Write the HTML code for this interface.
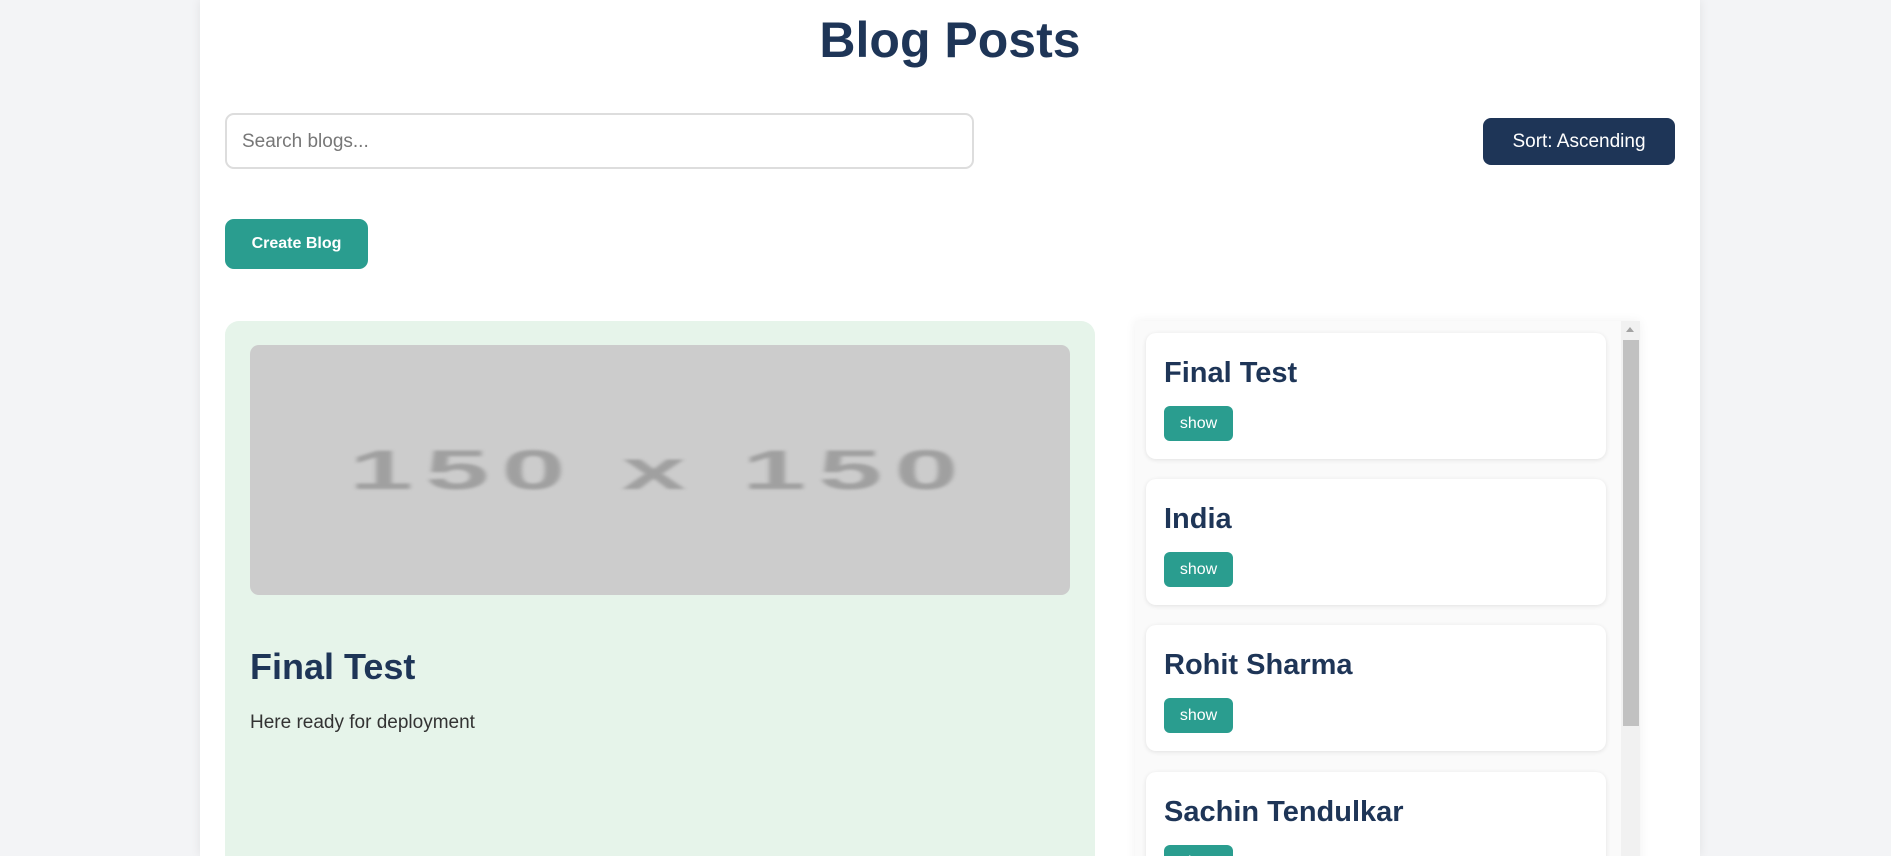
<!DOCTYPE html>
<html style="overflow:hidden;height:856px"><head><style>
*{box-sizing:border-box;margin:0;padding:0}
html,body{overflow:hidden}
body{width:1891px;height:856px;background:#f3f4f6;font-family:"Liberation Sans",Arial,sans-serif;position:relative}
.wrap{position:absolute;left:200px;top:0;width:1500px;height:856px;background:#fff;box-shadow:0 0 10px rgba(0,0,0,.08);overflow:hidden}
h1{position:absolute;left:0;width:1500px;top:11px;text-align:center;font-size:50px;color:#1e3557;font-weight:bold}
.search{position:absolute;left:25px;top:113px;width:749px;height:56px;border:2px solid #ddd;border-radius:9px;font-size:19px;color:#777;padding:16px 15px}
.sort{position:absolute;left:1283px;top:118px;width:192px;height:47px;background:#1e3557;color:#fff;border-radius:8px;font-size:19px;text-align:center;line-height:47px}
.create{position:absolute;left:25px;top:219px;width:143px;height:50px;background:#2a9d8f;color:#fff;border-radius:9px;font-size:16px;font-weight:bold;text-align:center;line-height:50px}
.main{position:absolute;left:25px;top:321px;width:870px;height:560px;background:#e6f4ea;border-radius:14px}
.img{position:absolute;left:25px;top:24px;width:820px;height:250px;background:#cccccc;border-radius:9px;overflow:hidden}
.img span{position:absolute;left:0;width:820px;top:0;line-height:250px;text-align:center;font-size:56px;font-weight:bold;color:#a0a0a0;letter-spacing:6px;transform:scaleX(2.05);filter:blur(1.2px)}
.main h2{position:absolute;left:25px;top:325px;font-size:36px;color:#1e3557}
.main p{position:absolute;left:25px;top:391px;font-size:19px;color:#333}
.list{position:absolute;left:935px;top:321px;width:505px;height:560px;background:#fafafa;box-shadow:0 0 10px rgba(0,0,0,.06)}
.sb{position:absolute;left:486px;top:0;width:19px;height:560px;background:#f1f1f1}
.sb .th{position:absolute;left:2px;top:19px;width:16px;height:386px;background:#c1c1c1}
.sb .ar{position:absolute;left:5px;top:6px;width:0;height:0;border-left:4px solid transparent;border-right:4px solid transparent;border-bottom:5px solid #a3a3a3}
.card{position:absolute;left:11px;width:460px;height:126px;background:#fff;border-radius:10px;box-shadow:0 1px 5px rgba(0,0,0,.1)}
.card h3{position:absolute;left:18px;top:24px;font-size:29px;color:#1e3557}
.card .b{position:absolute;left:18px;top:73px;width:69px;height:35px;background:#2a9d8f;color:#fff;border-radius:6px;font-size:16px;text-align:center;line-height:35px}
</style></head><body>
<div class="wrap">
<h1>Blog Posts</h1>
<div class="search">Search blogs...</div>
<div class="sort">Sort: Ascending</div>
<div class="create">Create Blog</div>
<div class="main">
<div class="img"><span>150 x 150</span></div>
<h2>Final Test</h2>
<p>Here ready for deployment</p>
</div>
<div class="list">
<div class="card" style="top:12px"><h3>Final Test</h3><div class="b">show</div></div>
<div class="card" style="top:158px"><h3>India</h3><div class="b">show</div></div>
<div class="card" style="top:304px"><h3>Rohit Sharma</h3><div class="b">show</div></div>
<div class="card" style="top:451px"><h3>Sachin Tendulkar</h3><div class="b">show</div></div>
<div class="sb"><div class="ar"></div><div class="th"></div></div>
</div>
</div>
</body></html>
